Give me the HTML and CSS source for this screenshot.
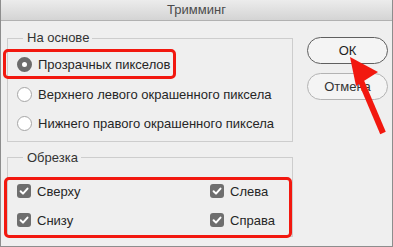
FILE: index.html
```html
<!DOCTYPE html>
<html lang="ru">
<head>
<meta charset="utf-8">
<link rel="stylesheet" href="styles.css">
</head>
<body>
<div class="window">
  <div class="titlebar">Тримминг</div>
  <div class="content">
    <div class="main">
      <fieldset class="group group-basis">
        <legend>На основе</legend>
        <label class="row"><span class="radio radio-on"></span>Прозрачных пикселов</label>
        <label class="row"><span class="radio"></span>Верхнего левого окрашенного пиксела</label>
        <label class="row"><span class="radio"></span>Нижнего правого окрашенного пиксела</label>
      </fieldset>
      <fieldset class="group group-trim">
        <legend>Обрезка</legend>
        <div class="checks">
          <label class="row"><span class="check"><svg viewBox="0 0 14 14" width="14" height="14"><path d="M3.6 7.3 L6 9.6 L10.5 4.6" fill="none" stroke="#fff" stroke-width="2" stroke-linecap="round" stroke-linejoin="round"/></svg></span>Сверху</label>
          <label class="row"><span class="check"><svg viewBox="0 0 14 14" width="14" height="14"><path d="M3.6 7.3 L6 9.6 L10.5 4.6" fill="none" stroke="#fff" stroke-width="2" stroke-linecap="round" stroke-linejoin="round"/></svg></span>Слева</label>
          <label class="row"><span class="check"><svg viewBox="0 0 14 14" width="14" height="14"><path d="M3.6 7.3 L6 9.6 L10.5 4.6" fill="none" stroke="#fff" stroke-width="2" stroke-linecap="round" stroke-linejoin="round"/></svg></span>Снизу</label>
          <label class="row"><span class="check"><svg viewBox="0 0 14 14" width="14" height="14"><path d="M3.6 7.3 L6 9.6 L10.5 4.6" fill="none" stroke="#fff" stroke-width="2" stroke-linecap="round" stroke-linejoin="round"/></svg></span>Справа</label>
        </div>
      </fieldset>
    </div>
    <div class="buttons">
      <button class="btn btn-default">ОК</button>
      <button class="btn">Отмена</button>
    </div>
  </div>
  <div class="mark mark-radio"></div>
  <div class="mark mark-checks"></div>
  <svg class="arrow" width="393" height="247" viewBox="0 0 393 247">
    <line x1="358" y1="74" x2="383" y2="133" stroke="#f2180f" stroke-width="6"/>
    <polygon points="350,57 378,72 356,86" fill="#f2180f"/>
  </svg>
</div>
</body>
</html>
```

FILE: styles.css
```css
html, body {
  margin: 0;
  padding: 0;
  background: #efefef;
}

.window {
  position: relative;
  width: 393px;
  height: 247px;
  box-sizing: border-box;
  border: 1px solid #8d8d8d;
  border-top: none;
  background: #efefef;
  font-family: "Liberation Sans", Arial, sans-serif;
  font-size: 13px;
  color: #262626;
  overflow: hidden;
}

.titlebar {
  height: 20px;
  line-height: 20px;
  text-align: center;
  color: #4b4b4b;
  font-size: 13px;
  background: linear-gradient(#ececec, #d4d4d4);
  border-bottom: 1px solid #b1b1b1;
}

.content {
  display: flex;
  gap: 14px;
  padding: 9px 0 0 6px;
}

.main {
  display: flex;
  flex-direction: column;
  gap: 8px;
  width: 286px;
}

.group {
  margin: 0;
  border: 1px solid #cdcdcd;
  padding: 0 8px 0 9px;
  min-width: 0;
}

.group legend {
  margin-left: 6px;
  padding: 0 3px 0 4px;
  line-height: 16px;
  color: #333;
}

.group-basis {
  padding-top: 4px;
  padding-bottom: 2px;
}

.group-trim {
  padding-top: 11px;
  padding-bottom: 1px;
}

.row {
  display: flex;
  align-items: center;
  height: 29.5px;
  gap: 6px;
  white-space: nowrap;
}

.group-trim .row {
  height: 29px;
}

.checks {
  display: grid;
  grid-template-columns: 193px 1fr;
}

.radio {
  width: 15px;
  height: 15px;
  box-sizing: border-box;
  border-radius: 50%;
  border: 1px solid #a6a6a6;
  background: #fff;
  flex: none;
}

.radio-on {
  border: 5px solid #6c6c6c;
  background: #fff;
}

.check {
  width: 14px;
  height: 14px;
  border-radius: 3px;
  background: #6e6e6e;
  flex: none;
  display: flex;
}

.buttons {
  display: flex;
  flex-direction: column;
  gap: 9px;
  padding-top: 7px;
}

.btn {
  width: 81px;
  height: 27px;
  border-radius: 14px;
  border: 1px solid #b3b3b3;
  background: #f4f4f4;
  font-family: "Liberation Sans", Arial, sans-serif;
  font-size: 13px;
  color: #333;
  padding: 0;
}

.btn-default {
  border-color: #5f5f5f;
  color: #1e1e1e;
}

.mark {
  position: absolute;
  border: 3px solid #f2180f;
  border-radius: 5px;
}

.mark-radio {
  left: 2px;
  top: 49px;
  width: 167px;
  height: 24px;
}

.mark-checks {
  left: 3px;
  top: 177px;
  width: 282px;
  height: 55px;
}

.arrow {
  position: absolute;
  left: -1px;
  top: 0;
}
```
